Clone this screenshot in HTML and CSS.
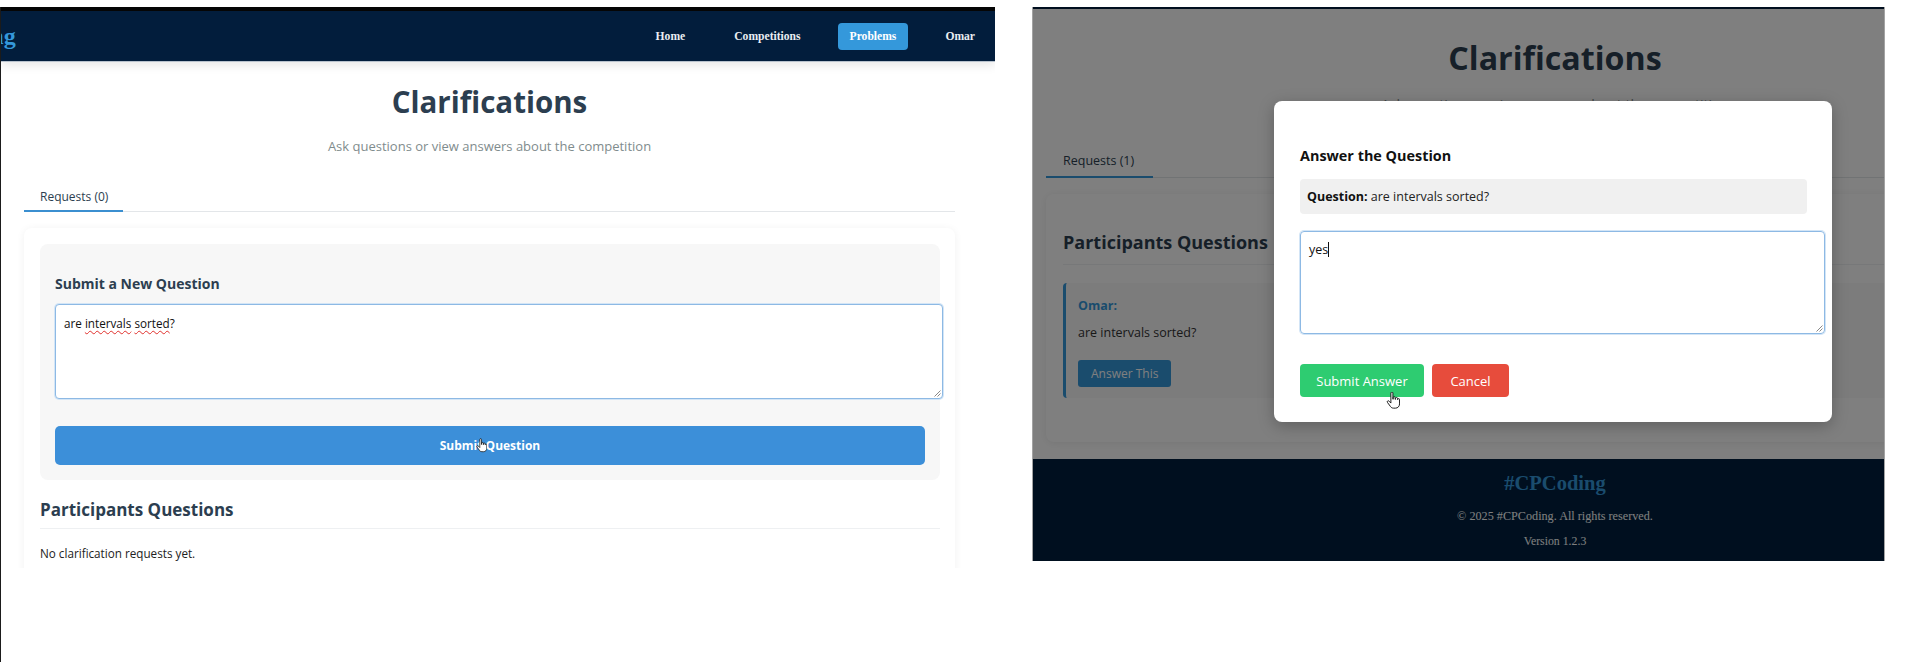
FILE: index.html
```html
<!DOCTYPE html>
<html lang="en">
<head>
<meta charset="utf-8">
<title>Clarifications</title>
<link rel="stylesheet" href="styles.css">
</head>
<body>
<div class="stage">
  <section class="shot-left">
    <div class="left-clip">
      <div class="topbar"></div>
      <nav class="nav">
        <div class="logo">#CPCoding</div>
        <ul class="nav-links">
          <li><a class="nav-link">Home</a></li>
          <li><a class="nav-link">Competitions</a></li>
          <li><a class="nav-link active">Problems</a></li>
          <li><a class="nav-link">Omar</a></li>
        </ul>
      </nav>
      <main class="main-left">
        <h1 class="title">Clarifications</h1>
        <p class="subtitle">Ask questions or view answers about the competition</p>
        <div class="tabs">
          <div class="tab">Requests (0)</div>
        </div>
        <div class="card">
          <div class="form-box">
            <h3 class="form-title">Submit a New Question</h3>
            <div class="textarea">are <span class="typo">intervals</span> <span class="typo">sorted</span>?
              <svg class="grip" viewBox="0 0 8 8" width="8" height="8"><path d="M7.5 1.5 1.5 7.5M7.5 4.5 4.5 7.5" stroke="#888" stroke-width="1" fill="none"/></svg>
            </div>
            <button class="btn-submit">Submit Question</button>
          </div>
          <h2 class="section-title">Participants Questions</h2>
          <p class="empty">No clarification requests yet.</p>
        </div>
      </main>
      <svg class="cursor cursor-left" viewBox="0 0 16 20" width="11" height="15"><path d="M5.5 1.3a1.2 1.2 0 0 1 2.4 0V8.5h.3V6.7a1.2 1.2 0 0 1 2.4 0v2h.3v-1a1.2 1.2 0 0 1 2.4 0v1.2h.2a1.1 1.1 0 0 1 2.2 0V14c0 2.8-2 5-4.8 5H8.6c-1.5 0-2.6-.6-3.5-1.8L1.5 12.3a1.2 1.2 0 0 1 1.9-1.5L5.5 13Z" fill="#fff" stroke="#111" stroke-width="1.1" stroke-linejoin="round"/></svg>
    </div>
  </section>

  <section class="shot-right">
    <div class="page">
      <div class="nav-strip"></div>
      <main class="main-right">
        <h1 class="title-r">Clarifications</h1>
        <p class="subtitle-r">Ask questions or view answers about the competition</p>
        <div class="tabs-r">
          <div class="tab-r">Requests (1)</div>
        </div>
        <div class="card-r">
          <h2 class="section-title-r">Participants Questions</h2>
          <div class="q-item">
            <div class="q-author">Omar:</div>
            <p class="q-text">are intervals sorted?</p>
            <button class="btn-answer">Answer This</button>
          </div>
        </div>
      </main>
      <footer class="footer">
        <div class="footer-logo">#CPCoding</div>
        <p class="footer-copy">© 2025 #CPCoding. All rights reserved.</p>
        <p class="footer-version">Version 1.2.3</p>
      </footer>
    </div>
    <div class="overlay"></div>
    <div class="modal">
      <h3 class="modal-title">Answer the Question</h3>
      <div class="modal-question"><strong>Question:</strong> are intervals sorted?</div>
      <div class="modal-textarea">yes<span class="caret"></span>
        <svg class="grip" viewBox="0 0 8 8" width="8" height="8"><path d="M7.5 1.5 1.5 7.5M7.5 4.5 4.5 7.5" stroke="#888" stroke-width="1" fill="none"/></svg>
      </div>
      <div class="modal-actions">
        <button class="btn-green">Submit Answer</button>
        <button class="btn-red">Cancel</button>
      </div>
    </div>
    <svg class="cursor cursor-right" viewBox="0 0 16 20" width="14" height="17"><path d="M5.5 1.3a1.2 1.2 0 0 1 2.4 0V8.5h.3V6.7a1.2 1.2 0 0 1 2.4 0v2h.3v-1a1.2 1.2 0 0 1 2.4 0v1.2h.2a1.1 1.1 0 0 1 2.2 0V14c0 2.8-2 5-4.8 5H8.6c-1.5 0-2.6-.6-3.5-1.8L1.5 12.3a1.2 1.2 0 0 1 1.9-1.5L5.5 13Z" fill="#fff" stroke="#111" stroke-width="1.1" stroke-linejoin="round"/></svg>
  </section>
</div>
</body>
</html>
```

FILE: styles.css
```css
* { box-sizing: border-box; }
html, body { margin: 0; padding: 0; background: #fff; }
body {
  width: 1906px;
  height: 662px;
  overflow: hidden;
  font-family: "Open Sans", "Noto Sans", sans-serif;
  color: #2c3e50;
}
p, h1, h2, h3 { margin: 0; }
button { font-family: inherit; border: none; cursor: pointer; }

.stage {
  display: flex;
  align-items: flex-start;
  padding-top: 7px;
}

/* ---------- left screenshot ---------- */
.shot-left {
  width: 995px;
  height: 655px;
  border-left: 1px solid #1b1b1b;
  flex: none;
}
.left-clip {
  height: 561px;
  overflow: hidden;
  position: relative;
}
.topbar { height: 4px; background: #060606; }
.nav {
  height: 51px;
  background: #021d3c;
  border-bottom: 1px solid #b8c2cd;
  box-shadow: 0 3px 10px rgba(0, 0, 0, 0.10);
  display: flex;
  align-items: center;
  justify-content: space-between;
  overflow: hidden;
  position: relative;
  z-index: 1;
}
.logo {
  font-family: "Liberation Serif", serif;
  font-weight: bold;
  font-size: 24px;
  color: #3498db;
  margin-left: -104px;
  white-space: nowrap;
}
.nav-links {
  display: flex;
  gap: 25px;
  list-style: none;
  margin: 0 8px 0 0;
  padding: 0;
  font-family: "Liberation Serif", serif;
  font-weight: bold;
  font-size: 11.6px;
}
.nav-link {
  display: block;
  padding: 6px 12px;
  line-height: 15px;
  color: #e9edf2;
  border-radius: 4px;
}
.nav-link.active { background: #3498db; color: #fff; }

.main-left { padding: 0 40px 0 23px; }
.title {
  font-size: 29.5px;
  line-height: 36px;
  font-weight: 700;
  text-align: center;
  margin-top: 22px;
  color: #2c3e50;
}
.subtitle {
  font-size: 13px;
  line-height: 18px;
  text-align: center;
  color: #7f8c8d;
  margin-top: 17px;
}
.tabs {
  margin-top: 23px;
  border-bottom: 1px solid #e3e6e9;
  display: flex;
}
.tab {
  font-size: 12px;
  line-height: 17px;
  padding: 10px 15px 5px 16px;
  border-bottom: 2px solid #3b8fd0;
  margin-bottom: -1px;
  color: #2c3e50;
}
.card {
  margin-top: 16px;
  background: #fff;
  border-radius: 8px;
  box-shadow: 0 1px 8px rgba(0, 0, 0, 0.06);
  padding: 16px 15px 16px 16px;
}
.form-box {
  background: #f7f7f7;
  border-radius: 8px;
  padding: 20px 15px 15px;
}
.form-title {
  font-size: 14px;
  line-height: 19px;
  font-weight: 700;
  margin: 10px 0 11px;
  color: #2c3e50;
}
.textarea {
  position: relative;
  width: calc(100% + 18px);
  height: 95px;
  padding: 8px;
  border: 1px solid #8db9e4;
  box-shadow: 0 0 0 1px #d3e5f6;
  border-radius: 4px;
  background: #fff;
  font-size: 11.7px;
  line-height: 20px;
  color: #111;
}
.typo { text-decoration: underline wavy #e0302c; text-decoration-thickness: 1px; text-underline-offset: 2px; }
.grip { position: absolute; right: 1px; bottom: 1px; }
.btn-submit {
  display: block;
  width: 100%;
  margin-top: 27px;
  height: 39px;
  border-radius: 5px;
  background: #3c8fd9;
  color: #fff;
  font-size: 12px;
  font-weight: 700;
}
.section-title {
  margin-top: 18px;
  font-size: 17px;
  line-height: 23px;
  font-weight: 700;
  padding-bottom: 7px;
  border-bottom: 1px solid #eef0f2;
  color: #2c3e50;
}
.empty {
  margin-top: 16px;
  font-size: 11.7px;
  line-height: 17px;
  color: #222;
}
.cursor { position: absolute; z-index: 5; }
.cursor-left { left: 475px; top: 431px; }

/* ---------- right screenshot ---------- */
.shot-right {
  flex: none;
  margin-left: 37px;
  width: 853px;
  height: 554px;
  border-left: 1px solid #a3a3a3;
  border-right: 1px solid #a3a3a3;
  overflow: hidden;
  position: relative;
  background: #fff;
}
.page { width: 1044px; }
.nav-strip { height: 2px; background: #001f3f; }
.main-right { padding: 0 13px 17px; }
.title-r {
  font-size: 32.2px;
  line-height: 40px;
  font-weight: 700;
  text-align: center;
  margin-top: 29px;
  color: #2c3e50;
}
.subtitle-r {
  font-size: 14px;
  line-height: 20px;
  text-align: center;
  color: #7f8c8d;
  margin-top: 17px;
}
.tabs-r {
  margin-top: 27px;
  border-bottom: 1px solid #e3e6e9;
  display: flex;
}
.tab-r {
  font-size: 12.5px;
  line-height: 18px;
  padding: 10px 19px 6px 17px;
  border-bottom: 2px solid #3498db;
  margin-bottom: -1px;
  color: #2c3e50;
}
.card-r {
  margin-top: 16px;
  background: #fff;
  border-radius: 8px;
  box-shadow: 0 1px 8px rgba(0, 0, 0, 0.08);
  padding: 17px 17px 44px;
}
.section-title-r {
  margin-top: 19px;
  font-size: 18px;
  line-height: 24px;
  font-weight: 700;
  padding-bottom: 10px;
  border-bottom: 1px solid #eef0f2;
  color: #2c3e50;
}
.q-item {
  margin-top: 18px;
  border-left: 3px solid #3498db;
  background: #f9f9f9;
  border-radius: 4px;
  padding: 13px 15px 11px 12px;
}
.q-author {
  font-size: 12.5px;
  line-height: 20px;
  font-weight: 700;
  color: #3498db;
}
.q-text {
  margin-top: 8px;
  font-size: 12.5px;
  line-height: 18px;
  color: #333;
}
.btn-answer {
  margin-top: 18px;
  background: #3498db;
  color: #fff;
  font-size: 12px;
  line-height: 17px;
  padding: 5px 13px;
  border-radius: 3px;
}
.footer {
  background: #001f3f;
  height: 102px;
  padding-top: 12px;
  text-align: center;
  font-family: "Liberation Serif", serif;
}
.footer-logo {
  font-size: 20.5px;
  line-height: 24px;
  font-weight: bold;
  color: #3498db;
}
.footer-copy {
  margin-top: 12px;
  font-size: 12.2px;
  line-height: 18px;
  color: #fff;
}
.footer-version {
  margin-top: 7px;
  font-size: 11.8px;
  line-height: 18px;
  color: #fff;
}
.overlay {
  position: absolute;
  inset: 0;
  background: rgba(0, 0, 0, 0.5);
}
.modal {
  position: absolute;
  left: 241px;
  top: 94px;
  width: 558px;
  background: #fff;
  border-radius: 8px;
  box-shadow: 0 4px 16px rgba(0, 0, 0, 0.25);
  padding: 25px 25px 25px 26px;
  color: #222;
}
.modal-title {
  font-size: 14.4px;
  line-height: 22px;
  font-weight: 700;
  margin: 19px 0 12px;
  color: #111;
}
.modal-question {
  background: #f0f0f0;
  border-radius: 4px;
  padding: 8px 7px;
  font-size: 12.5px;
  line-height: 19px;
  color: #222;
}
.modal-question strong { font-weight: 700; color: #111; }
.modal-textarea {
  position: relative;
  margin-top: 17px;
  width: calc(100% + 18px);
  height: 103px;
  padding: 8px;
  border: 1px solid #8db9e4;
  box-shadow: 0 0 0 1px #d3e5f6;
  border-radius: 4px;
  font-size: 12.5px;
  line-height: 20px;
  color: #111;
}
.caret {
  display: inline-block;
  width: 1px;
  height: 15px;
  background: #111;
  vertical-align: -3px;
}
.modal-actions {
  margin-top: 30px;
  display: flex;
  gap: 8px;
}
.btn-green, .btn-red {
  height: 33px;
  padding: 0 16px;
  border-radius: 4px;
  color: #fff;
  font-size: 13px;
}
.btn-green { background: #2ecc71; width: 124px; }
.btn-red { background: #e74c3c; width: 77px; padding: 0; }
.cursor-right { left: 353px; top: 385px; }
```
